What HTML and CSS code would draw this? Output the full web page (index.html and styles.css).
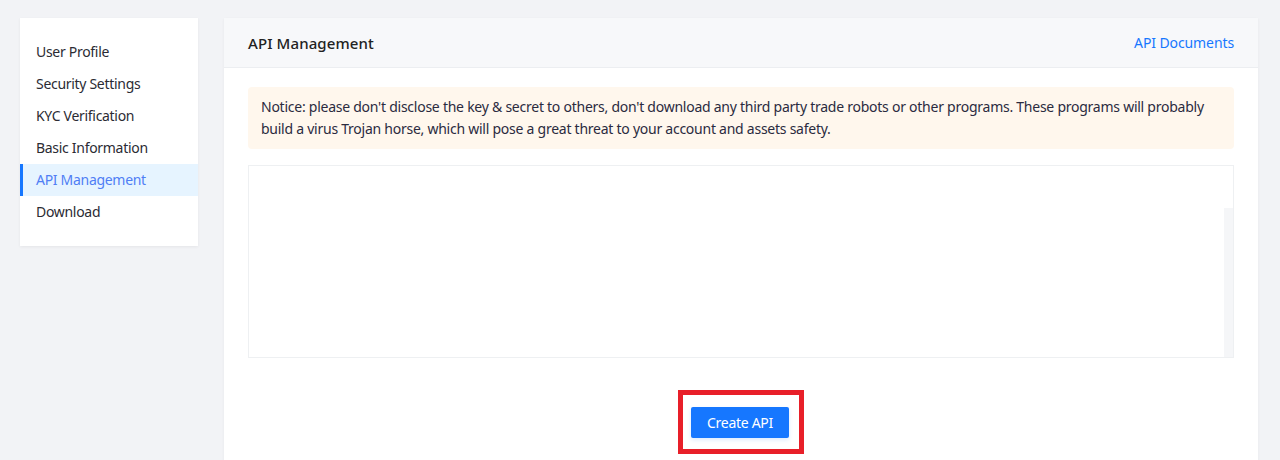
FILE: index.html
```html
<!DOCTYPE html>
<html lang="en">
<head>
    <meta charset="UTF-8">
    <meta name="viewport" content="width=device-width, initial-scale=1.0">
    <title>API Management</title>
    <link rel="stylesheet" href="styles.css">
</head>
<body>

    <div class="page">
        <ul class="side-menu">
            <li>User Profile</li>
            <li>Security Settings</li>
            <li>KYC Verification</li>
            <li>Basic Information</li>
            <li class="active">API Management</li>
            <li>Download</li>
        </ul>

        <div class="card">
            <div class="card-head">
                <span class="card-title">API Management</span>
                <a href="#" class="doc-link">API Documents</a>
            </div>

            <div class="card-body">
                <div class="notice">
                    Notice: please don't disclose the key &amp; secret to others, don't download any third party trade robots or other programs. These programs will probably build a virus Trojan horse, which will pose a great threat to your account and assets safety.
                </div>

                <div class="table-box">
                    <div class="table-head"></div>
                    <div class="table-rows">
                        <div class="scroll-track"></div>
                    </div>
                </div>

                <div class="actions">
                    <div class="highlight">
                        <button class="btn-create">Create API</button>
                    </div>
                </div>
            </div>
        </div>
    </div>

</body>
</html>
```

FILE: styles.css
```css
body {
    margin: 0;
    padding: 0;
    background-color: #f2f3f6;
    font-family: "Noto Sans", "Open Sans", sans-serif;
    color: #2b2b33;
    font-size: 14px;
    letter-spacing: -0.3px;
}

.page {
    display: flex;
    align-items: flex-start;
    gap: 26px;
    padding: 18px 22px 0 20px;
}

.side-menu {
    list-style: none;
    margin: 0;
    padding: 18px 0;
    width: 178px;
    flex-shrink: 0;
    background-color: white;
    box-shadow: 0 1px 3px rgba(0, 0, 0, 0.06);
}

.side-menu li {
    height: 32px;
    line-height: 32px;
    padding-left: 13px;
    font-size: 14px;
    color: #2b2b33;
    border-left: 3px solid transparent;
}

.side-menu li.active {
    background-color: #e6f4ff;
    border-left-color: #1677ff;
    color: #4f7ef5;
}

.card {
    flex: 1;
    background-color: white;
    min-height: 460px;
    box-shadow: 0 1px 3px rgba(0, 0, 0, 0.05);
}

.card-head {
    display: flex;
    justify-content: space-between;
    align-items: center;
    height: 49px;
    padding: 0 24px;
    background-color: #f7f8fa;
    border-bottom: 1px solid #eceef1;
}

.card-title {
    font-size: 15px;
    font-weight: 500;
    letter-spacing: 0.1px;
    color: #222;
}

.doc-link {
    color: #1677ff;
    text-decoration: none;
    font-size: 14px;
    letter-spacing: -0.1px;
}

.card-body {
    padding: 19px 24px 0 24px;
}

.notice {
    background-color: #fff7ed;
    border-radius: 4px;
    padding: 9px 13px 9px 13px;
    line-height: 22px;
    font-size: 14px;
    letter-spacing: -0.25px;
    color: #2b2b3f;
}

.table-box {
    margin-top: 16px;
    height: 191px;
    border: 1px solid #eef0f2;
    display: flex;
    flex-direction: column;
}

.table-head {
    height: 42px;
}

.table-rows {
    flex: 1;
    display: flex;
    justify-content: flex-end;
}

.scroll-track {
    width: 9px;
    background-color: #f5f6f8;
}

.actions {
    display: flex;
    justify-content: center;
    margin-top: 32px;
}

.highlight {
    border: 5px solid #e81f29;
    padding: 12px 10px 11px 8px;
}

.btn-create {
    width: 98px;
    height: 31px;
    border: none;
    border-radius: 2px;
    background-color: #1677ff;
    color: white;
    font-family: "Noto Sans", "Open Sans", sans-serif;
    font-size: 14px;
    letter-spacing: -0.3px;
    box-shadow: 0 2px 4px rgba(22, 119, 255, 0.15);
    cursor: pointer;
}
```
